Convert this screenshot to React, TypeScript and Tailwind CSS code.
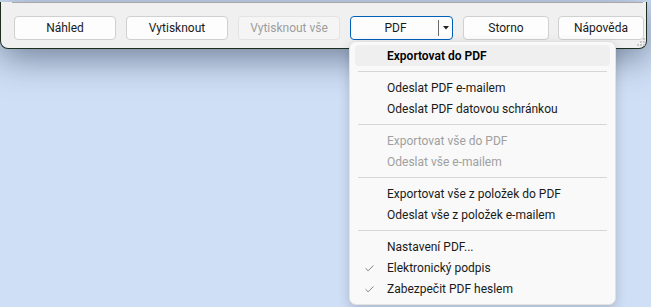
import { Check } from "lucide-react";

type MenuEntry =
  | { kind: "sep" }
  | { kind: "item"; label: string; bold?: boolean; disabled?: boolean; checked?: boolean; active?: boolean };

const menu: MenuEntry[] = [
  { kind: "item", label: "Exportovat do PDF", bold: true, active: true },
  { kind: "sep" },
  { kind: "item", label: "Odeslat PDF e-mailem" },
  { kind: "item", label: "Odeslat PDF datovou schránkou" },
  { kind: "sep" },
  { kind: "item", label: "Exportovat vše do PDF", disabled: true },
  { kind: "item", label: "Odeslat vše e-mailem", disabled: true },
  { kind: "sep" },
  { kind: "item", label: "Exportovat vše z položek do PDF" },
  { kind: "item", label: "Odeslat vše z položek e-mailem" },
  { kind: "sep" },
  { kind: "item", label: "Nastavení PDF..." },
  { kind: "item", label: "Elektronický podpis", checked: true },
  { kind: "item", label: "Zabezpečit PDF heslem", checked: true },
];

const Button = ({ label, width, disabled }: { label: string; width: string; disabled?: boolean }) => (
  <div
    className={`${width} h-[24px] flex items-center justify-center rounded-[4px] border ${
      disabled ? "bg-[#f5f5f5] border-[#e3e3e3] text-[#9d9d9d]" : "bg-[#fdfdfd] border-[#d0d0d0] text-[#1a1a1a]"
    }`}
  >
    {label}
  </div>
);

const PdfMenu = () => (
  <div className="absolute left-[349px] top-[41px] w-[267px] pt-[3px] pb-[5px] bg-[#f9f9f9] border border-[#e2e2e2] rounded-[7px] shadow-[0_4px_12px_rgba(0,0,0,0.18)]">
    {menu.map((entry, i) =>
      entry.kind === "sep" ? (
        <div key={i} className="h-[11px] flex items-center pl-[8px] pr-[8px]">
          <div className="h-px w-full bg-[#d6d6d6]" />
        </div>
      ) : (
        <div
          key={i}
          className={`relative h-[21px] mx-[5px] flex items-center pl-[32px] rounded-[4px] ${
            entry.active ? "bg-[#efefef]" : ""
          } ${entry.bold ? "font-semibold text-black" : ""} ${
            entry.disabled ? "text-[#a0a0a0]" : "text-[#1a1a1a]"
          }`}
        >
          {entry.checked && (
            <Check className="absolute left-[9px] top-[6px] text-[#555]" size={11} strokeWidth={1.6} />
          )}
          {entry.label}
        </div>
      )
    )}
  </div>
);

export default function App() {
  return (
    <div
      className="relative w-[651px] h-[307px] overflow-hidden bg-[#cfdff6] text-[12px]"
      style={{ fontFamily: 'Roboto, "Segoe UI", sans-serif' }}
    >
      <div className="w-[647px] h-[47px] bg-[#f0f0f0] border-x border-b border-[#1e2e1e] rounded-b-[8px] shadow-[0_8px_36px_rgba(40,55,80,0.6)] relative">
        <div className="mt-[2px] ml-[11px] mr-[3px] h-px bg-[#a8a8a8]" />
        <div className="mt-[13px] ml-[13px] flex gap-[10px]">
          <Button label="Náhled" width="w-[102px]" />
          <Button label="Vytisknout" width="w-[102px]" />
          <Button label="Vytisknout vše" width="w-[102px]" disabled />
          <div className="w-[103px] h-[24px] flex items-center rounded-[4px] border-[1.5px] border-[#005fb8] bg-[#fdfdfd] text-[#1a1a1a]">
            <div className="flex-1 text-center pl-[2px]">PDF</div>
            <div className="w-px h-[16px] bg-[#6a6a6a]" />
            <div className="w-[13px] flex justify-center">
              <svg width="6" height="4" viewBox="0 0 6 4">
                <path d="M0 0h6L3 3.5z" fill="#222" />
              </svg>
            </div>
          </div>
          <Button label="Storno" width="w-[86px]" />
          <div className="-ml-[1px]">
            <Button label="Nápověda" width="w-[86px]" />
          </div>
        </div>
        <svg className="absolute right-[1px] bottom-[2px]" width="8" height="8" viewBox="0 0 8 8">
          <rect x="6" y="0" width="2" height="2" fill="#c8c8c8" />
          <rect x="3" y="3" width="2" height="2" fill="#c8c8c8" />
          <rect x="6" y="3" width="2" height="2" fill="#c8c8c8" />
          <rect x="0" y="6" width="2" height="2" fill="#c8c8c8" />
          <rect x="3" y="6" width="2" height="2" fill="#c8c8c8" />
          <rect x="6" y="6" width="2" height="2" fill="#c8c8c8" />
        </svg>
      </div>
      <PdfMenu />
    </div>
  );
}
